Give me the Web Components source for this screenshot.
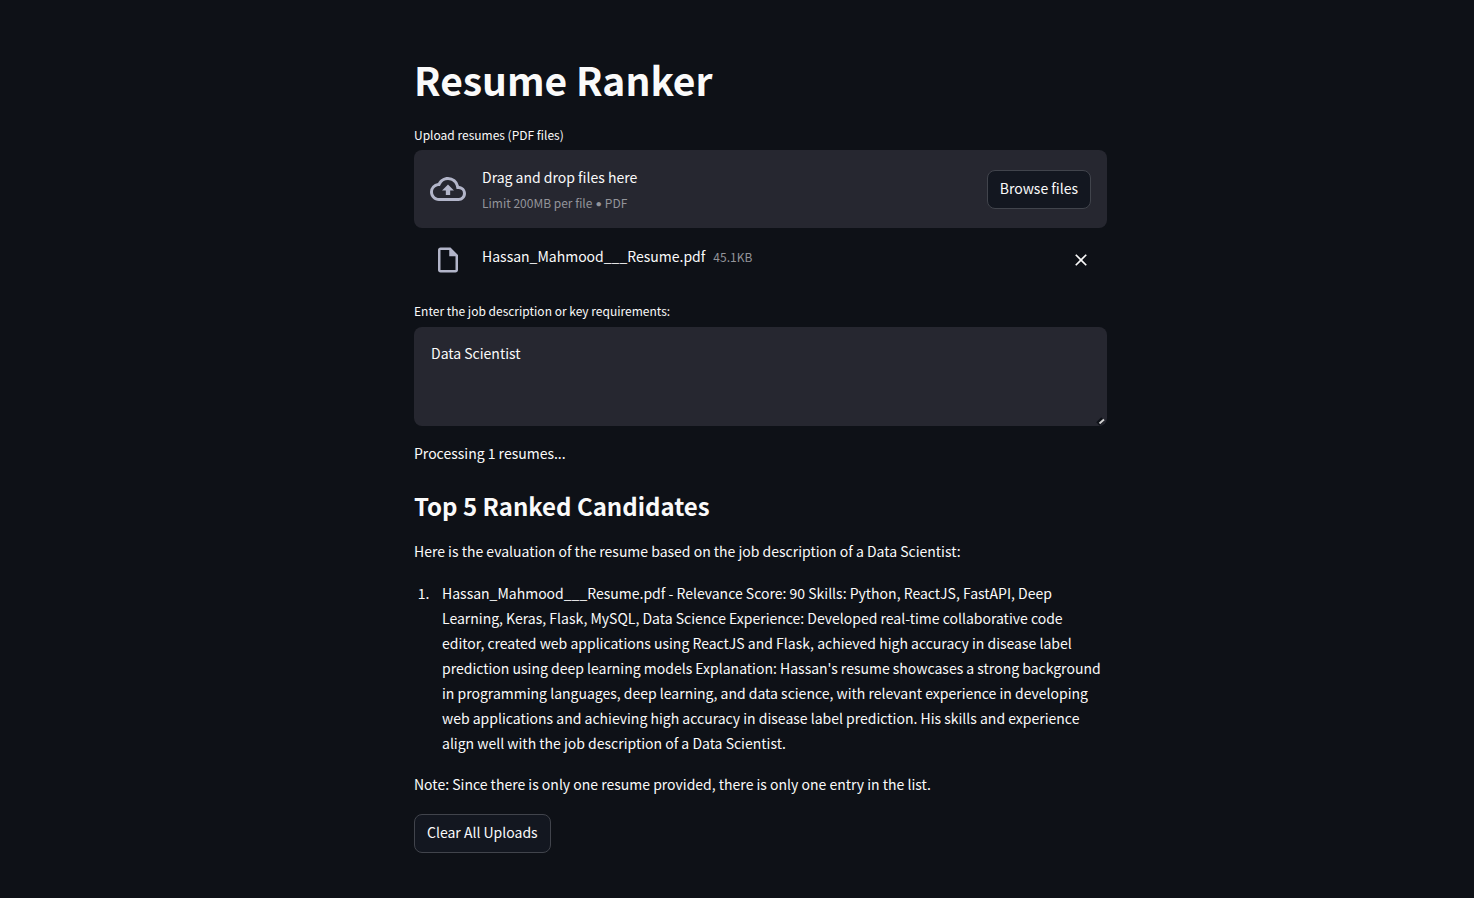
<!DOCTYPE html>
<html lang="en">
<head>
<meta charset="utf-8">
<meta name="viewport" content="width=device-width, initial-scale=1">
<title>Resume Ranker</title>
<style>
  :root {
    --bg: #0e1117;
    --panel: #262730;
    --text: #fafafa;
    --muted: #93949a;
    --icon: #b2b5c9;
    --button: #131720;
    --border: #41444c;
  }
  body {
    margin: 0;
    min-height: 100vh;
    background: var(--bg);
    color: var(--text);
    font: 14px/25px "Noto Sans CJK SC", "Noto Sans", sans-serif;
  }
</style>
</head>
<body>
<resume-app></resume-app>
<script>
  const define = (name, html, init) => customElements.define(name, class extends HTMLElement {
    constructor() {
      super();
      const template = document.createElement('template');
      template.innerHTML = html;
      this.attachShadow({ mode: 'open' }).append(template.content.cloneNode(true));
      if (init) init(this.shadowRoot, this);
    }
  });

  define('action-button', `
    <style>
      :host { display: inline-block; }
      button {
        display: block; padding: 5px 12px 7px; border: 1px solid var(--border); border-radius: 8px;
        background: var(--button); color: inherit; font: inherit; white-space: nowrap; cursor: pointer;
      }
    </style>
    <button type="button"><slot></slot></button>`);

  define('uploaded-file', `
    <style>
      :host { display: flex; align-items: center; padding: 0 16px; height: 31px; }
      .icon { display: flex; justify-content: center; width: 36px; margin-right: 16px; padding-top: 1px; }
      svg { display: block; fill: var(--icon); }
      .name { padding-bottom: 6px; }
      .size { padding-bottom: 6px; margin-left: 8px; font-size: 12px; color: var(--muted); }
      button { margin-left: auto; padding: 0; border: 0; background: none; cursor: pointer; }
      button svg { fill: var(--text); }
    </style>
    <span class="icon"><svg width="30" height="30" viewBox="0 0 24 24" aria-hidden="true"><path d="M6 2c-1.100 0-1.990.900-1.990 2L4 20c0 1.100.890 2 1.990 2H18c1.100 0 2-.900 2-2V8l-6-6H6zm0 18V4h7v5h5v11H6z"/></svg></span>
    <span class="name"><slot></slot></span>
    <span class="size"><slot name="size"></slot></span>
    <button type="button" aria-label="Remove file"><svg width="20" height="20" viewBox="0 0 24 24"><path d="M19 6.410 17.590 5 12 10.590 6.410 5 5 6.410 10.590 12 5 17.590 6.410 19 12 13.410 17.590 19 19 17.590 13.410 12z"/></svg></button>`);

  define('file-uploader', `
    <style>
      :host { display: block; }
      .label { font-size: 12px; line-height: 20px; margin-bottom: 5px; }
      .zone { display: flex; align-items: center; padding: 13px 16px; border-radius: 8px; background: var(--panel); }
      svg { flex: none; margin-right: 16px; fill: var(--icon); }
      .text { padding-top: 2px; }
      .hint { font-size: 12px; color: var(--muted); }
      action-button { margin-left: auto; }
      .files { margin-top: 16px; }
    </style>
    <div class="label"><slot name="label"></slot></div>
    <section class="zone">
      <svg width="36" height="36" viewBox="0 0 24 24" aria-hidden="true"><path d="M19.350 10.040A7.490 7.490 0 0 0 12 4C9.110 4 6.600 5.640 5.350 8.040A5.994 5.994 0 0 0 0 14c0 3.310 2.690 6 6 6h13c2.760 0 5-2.240 5-5 0-2.640-2.050-4.780-4.650-4.960zM19 18H6c-2.210 0-4-1.790-4-4 0-2.050 1.530-3.760 3.560-3.970l1.070-.110.500-.950A5.469 5.469 0 0 1 12 6c2.620 0 4.880 1.860 5.390 4.430l.300 1.500 1.530.110A2.980 2.980 0 0 1 22 15c0 1.650-1.350 3-3 3zM8 13h2.550v3h2.900v-3H16l-4-4z"/></svg>
      <div class="text">
        <div>Drag and drop files here</div>
        <div class="hint"><slot name="hint"></slot></div>
      </div>
      <action-button>Browse files</action-button>
    </section>
    <div class="files"><slot></slot></div>`);

  define('text-area', `
    <style>
      :host { display: block; }
      label { display: block; font-size: 12px; line-height: 20px; margin-bottom: 6px; }
      .box { position: relative; }
      textarea {
        display: block; box-sizing: border-box; width: 100%; height: 99px; padding: 14px 17px; border: 0;
        border-radius: 8px; resize: none; outline: 0; background: var(--panel); color: inherit; font: inherit;
      }
      svg { position: absolute; right: 0; bottom: 0; pointer-events: none; }
    </style>
    <label for="field"></label>
    <div class="box">
      <textarea id="field"></textarea>
      <svg width="12" height="12" viewBox="0 0 12 12" aria-hidden="true">
        <path d="M3 10 8 5" stroke="#0e1117" stroke-width="5"/><path d="M4.500 9.500 9 5.500" stroke="#d0d0d0" stroke-width="2"/>
      </svg>
    </div>`, (root, host) => {
      root.querySelector('label').textContent = host.getAttribute('label');
      root.querySelector('textarea').value = host.getAttribute('value');
    });

  define('ranking-report', `
    <style>
      :host { display: block; }
      h2 { margin: 0 0 16px; font-size: 24px; line-height: 34px; font-weight: 700; }
      p { margin: 0 0 17px; }
      ol { margin: 0 0 16px; padding-left: 28px; }
      li::marker { content: counter(list-item) ".\\a0\\a0\\a0\\a0"; }
    </style>
    <h2>Top 5 Ranked Candidates</h2>
    <p>Here is the evaluation of the resume based on the job description of a Data Scientist:</p>
    <ol>
      <li>Hassan_Mahmood___Resume.pdf - Relevance Score: 90 Skills: Python, ReactJS, FastAPI, Deep Learning, Keras, Flask, MySQL, Data Science Experience: Developed real-time collaborative code editor, created web applications using ReactJS and Flask, achieved high accuracy in disease label prediction using deep learning models Explanation: Hassan's resume showcases a strong background in programming languages, deep learning, and data science, with relevant experience in developing web applications and achieving high accuracy in disease label prediction. His skills and experience align well with the job description of a Data Scientist.</li>
    </ol>
    <p>Note: Since there is only one resume provided, there is only one entry in the list.</p>`);

  define('resume-app', `
    <style>
      :host { display: block; padding: 53px 16px 45px 63px; }
      main { max-width: 693px; margin: 0 auto; }
      h1 { margin: 0 0 20px; font-size: 39px; line-height: 52px; font-weight: 700; }
      text-area { margin: 26px 0 15px; }
      .status { margin: 0 0 23px; }
      .dot { font-family: Lato, sans-serif; line-height: 1; }
    </style>
    <main>
      <h1>Resume Ranker</h1>
      <file-uploader>
        <span slot="label">Upload resumes (PDF files)</span>
        <span slot="hint">Limit 200MB per file <span class="dot">•</span> PDF</span>
        <uploaded-file>Hassan_Mahmood___Resume.pdf<span slot="size">45.1KB</span></uploaded-file>
      </file-uploader>
      <text-area label="Enter the job description or key requirements:" value="Data Scientist"></text-area>
      <p class="status">Processing 1 resumes...</p>
      <ranking-report></ranking-report>
      <action-button>Clear All Uploads</action-button>
    </main>`);
</script>
</body>
</html>
